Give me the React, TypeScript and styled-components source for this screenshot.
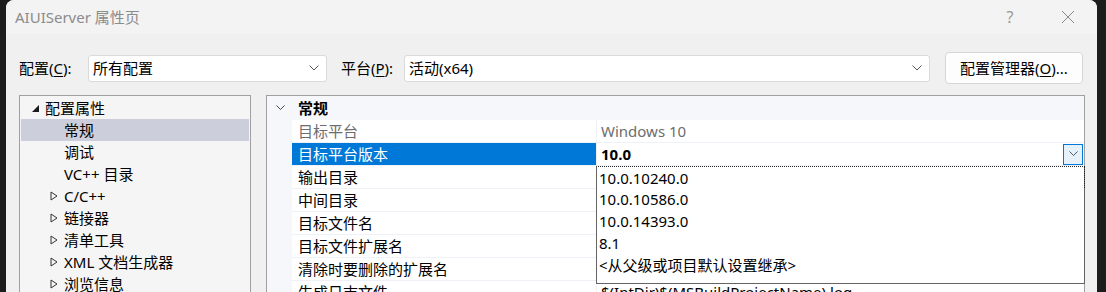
import React from "react";
import styled, { createGlobalStyle } from "styled-components";

const GlobalStyle = createGlobalStyle`
  html, body {
    margin: 0;
    padding: 0;
    background: #1c1c1c;
    overflow: hidden;
  }
  * {
    box-sizing: border-box;
  }
`;

const FONT = `"Noto Sans", "Noto Sans CJK SC", sans-serif`;

const Screen = styled.div`
  width: 1106px;
  height: 292px;
  display: flex;
  padding: 0 9px 0 6px;
  background: #1c1c1c;
  font-family: ${FONT};
  font-size: 15px;
  color: #000;
`;

const Window = styled.div`
  flex: 1;
  display: flex;
  flex-direction: column;
  background: #f0f0f0;
  border-top-left-radius: 8px;
  border-top-right-radius: 8px;
  overflow: hidden;
`;

const TitleBar = styled.div`
  height: 34px;
  flex: none;
  display: flex;
  align-items: center;
  padding-left: 9px;
  background: #f3f3f3;
`;

const Title = styled.div`
  flex: 1;
  color: #8b8b8b;
  font-size: 15px;
  line-height: 20px;
`;

const CaptionButton = styled.div`
  width: 58px;
  height: 34px;
  display: flex;
  align-items: center;
  justify-content: center;
  color: #9a9a9a;
  font-size: 16px;
`;

const Body = styled.div`
  flex: 1;
  display: flex;
  flex-direction: column;
  padding: 18px 12px 0 13px;
  min-height: 0;
`;

const ConfigRow = styled.div`
  height: 32px;
  display: flex;
  align-items: center;
`;

const Label = styled.span<{ $width: number }>`
  width: ${(p) => p.$width}px;
  flex: none;
  line-height: 20px;
  white-space: nowrap;
  u {
    text-decoration-thickness: 1px;
    text-underline-offset: 2px;
  }
`;

const Combo = styled.div<{ $width: number; $after?: number }>`
  width: ${(p) => p.$width}px;
  height: 27px;
  flex: none;
  margin-right: ${(p) => p.$after ?? 0}px;
  display: flex;
  align-items: center;
  padding: 0 7px 0 4px;
  background: #fff;
  border: 1px solid #dadada;
  border-radius: 3px;
  span {
    flex: 1;
    line-height: 20px;
  }
`;

const ManagerButton = styled.div`
  width: 138px;
  height: 32px;
  margin: 0 2px 0 auto;
  display: flex;
  align-items: center;
  justify-content: center;
  background: #fdfdfd;
  border: 1px solid #d6d6d6;
  border-radius: 4px;
  line-height: 20px;
  u {
    text-underline-offset: 2px;
  }
`;

const Panels = styled.div`
  flex: 1;
  display: flex;
  gap: 15px;
  margin-top: 11px;
  min-height: 0;
`;

const Tree = styled.div`
  width: 232px;
  flex: none;
  padding: 1px 1px 0;
  background: #f5f5f5;
  border: 1px solid #a0a0a0;
  border-bottom: none;
`;

const TreeRow = styled.div<{ $indent: number; $selected?: boolean }>`
  height: 22px;
  display: flex;
  align-items: center;
  padding-left: ${(p) => p.$indent}px;
  background: ${(p) => (p.$selected ? "#cccedb" : "transparent")};
  line-height: 20px;
  white-space: nowrap;
`;

const Expander = styled.span`
  width: 14px;
  flex: none;
  display: flex;
  align-items: center;
`;

const Grid = styled.div`
  flex: 1;
  position: relative;
  display: flex;
  flex-direction: column;
  background: #fff;
  border: 1px solid #a0a0a0;
  border-bottom: none;
`;

const GroupHeader = styled.div`
  height: 24px;
  flex: none;
  display: flex;
  align-items: center;
  gap: 6px;
  background: #f5f7fa;
  font-weight: 700;
  line-height: 20px;
`;

const GroupToggle = styled.span`
  width: 25px;
  flex: none;
  display: flex;
  justify-content: center;
  padding-left: 2px;
`;

const PropRow = styled.div`
  height: 23px;
  flex: none;
  display: flex;
`;

const Margin = styled.div`
  width: 25px;
  flex: none;
  background: #f5f7fa;
`;

const NameCell = styled.div<{ $selected?: boolean; $disabled?: boolean }>`
  width: 304px;
  flex: none;
  display: flex;
  align-items: center;
  padding-left: 6px;
  line-height: 20px;
  border-bottom: 1px solid #eef1f5;
  background: ${(p) => (p.$selected ? "#0078d7" : "#fff")};
  color: ${(p) => (p.$selected ? "#fff" : p.$disabled ? "#6d6d6d" : "#000")};
`;

const ValueCell = styled.div<{ $bold?: boolean; $disabled?: boolean }>`
  flex: 1;
  display: flex;
  align-items: center;
  padding-left: 4px;
  line-height: 20px;
  border-left: 1px solid #eef1f5;
  border-bottom: 1px solid #eef1f5;
  font-weight: ${(p) => (p.$bold ? 700 : 400)};
  color: ${(p) => (p.$disabled ? "#6d6d6d" : "#000")};
  white-space: nowrap;
  span {
    flex: 1;
  }
`;

const DropButton = styled.div`
  width: 20px;
  height: 21px;
  display: flex;
  align-items: center;
  justify-content: center;
  background: #e5f1fb;
  border: 1px solid #0078d7;
  margin-right: 1px;
`;

const DropList = styled.div`
  position: absolute;
  left: 329px;
  top: 70px;
  width: 489px;
  height: 118px;
  background: #fff;
  border: 1px solid #646464;
  border-top: none;
  z-index: 2;
`;

const DropItem = styled.div<{ $focused?: boolean }>`
  height: 22px;
  display: flex;
  align-items: center;
  padding-left: 2px;
  line-height: 20px;
  margin: 0 ${(p) => (p.$focused ? -1 : 0)}px;
  border-top: ${(p) => (p.$focused ? "1px dotted #222" : "none")};
  border-right: ${(p) => (p.$focused ? "1px dotted #222" : "none")};
  border-left: ${(p) => (p.$focused ? "1px solid #646464" : "none")};
`;

const Chevron = ({ color = "#555", w = 10 }: { color?: string; w?: number }) => (
  <svg width={w} height={w * 0.6} viewBox="0 0 10 6">
    <path d="M0.5 0.5 L5 5 L9.5 0.5" fill="none" stroke={color} strokeWidth="1" />
  </svg>
);

const Filled = () => (
  <svg width="9" height="9" viewBox="0 0 9 9">
    <polygon points="8,1 8,8 1,8" fill="#1a1a1a" />
  </svg>
);

const Hollow = () => (
  <svg width="8" height="10" viewBox="0 0 8 10">
    <polygon points="1,1 7,5 1,9" fill="none" stroke="#333" strokeWidth="1" />
  </svg>
);

const treeItems: { text: string; indent: number; kind?: "open" | "closed"; selected?: boolean }[] = [
  { text: "配置属性", indent: 10, kind: "open" },
  { text: "常规", indent: 43, selected: true },
  { text: "调试", indent: 43 },
  { text: "VC++ 目录", indent: 43 },
  { text: "C/C++", indent: 29, kind: "closed" },
  { text: "链接器", indent: 29, kind: "closed" },
  { text: "清单工具", indent: 29, kind: "closed" },
  { text: "XML 文档生成器", indent: 29, kind: "closed" },
  { text: "浏览信息", indent: 29, kind: "closed" },
];

const props = [
  { name: "目标平台", value: "Windows 10", disabled: true },
  { name: "目标平台版本", value: "10.0", selected: true },
  { name: "输出目录", value: "" },
  { name: "中间目录", value: "" },
  { name: "目标文件名", value: "" },
  { name: "目标文件扩展名", value: "" },
  { name: "清除时要删除的扩展名", value: "" },
  { name: "生成日志文件", value: "$(IntDir)$(MSBuildProjectName).log" },
];

const options = ["10.0.10240.0", "10.0.10586.0", "10.0.14393.0", "8.1", "<从父级或项目默认设置继承>"];

export default function App() {
  return (
    <>
      <GlobalStyle />
      <Screen>
        <Window>
          <TitleBar>
            <Title>AIUIServer 属性页</Title>
            <CaptionButton>?</CaptionButton>
            <CaptionButton>
              <svg width="14" height="14" viewBox="0 0 14 14">
                <path d="M1 1 L13 13 M13 1 L1 13" stroke="#8a8a8a" strokeWidth="1" />
              </svg>
            </CaptionButton>
          </TitleBar>
          <Body>
            <ConfigRow>
              <Label $width={69}>
                配置(<u>C</u>):
              </Label>
              <Combo $width={239} $after={14}>
                <span>所有配置</span>
                <Chevron />
              </Combo>
              <Label $width={63}>
                平台(<u>P</u>):
              </Label>
              <Combo $width={526}>
                <span>活动(x64)</span>
                <Chevron />
              </Combo>
              <ManagerButton>
                配置管理器(<u>O</u>)...
              </ManagerButton>
            </ConfigRow>
            <Panels>
              <Tree>
                {treeItems.map((t) => (
                  <TreeRow key={t.text} $indent={t.indent} $selected={t.selected}>
                    {t.kind && <Expander>{t.kind === "open" ? <Filled /> : <Hollow />}</Expander>}
                    {t.text}
                  </TreeRow>
                ))}
              </Tree>
              <Grid>
                <GroupHeader>
                  <GroupToggle>
                    <Chevron color="#333" w={9} />
                  </GroupToggle>
                  常规
                </GroupHeader>
                {props.map((p) => (
                  <PropRow key={p.name}>
                    <Margin />
                    <NameCell $selected={p.selected} $disabled={p.disabled}>
                      {p.name}
                    </NameCell>
                    <ValueCell $bold={p.selected} $disabled={p.disabled}>
                      <span>{p.value}</span>
                      {p.selected && (
                        <DropButton>
                          <Chevron color="#444" w={9} />
                        </DropButton>
                      )}
                    </ValueCell>
                  </PropRow>
                ))}
                <DropList>
                  {options.map((o, i) => (
                    <DropItem key={o} $focused={i === 0}>
                      {o}
                    </DropItem>
                  ))}
                </DropList>
              </Grid>
            </Panels>
          </Body>
        </Window>
      </Screen>
    </>
  );
}
